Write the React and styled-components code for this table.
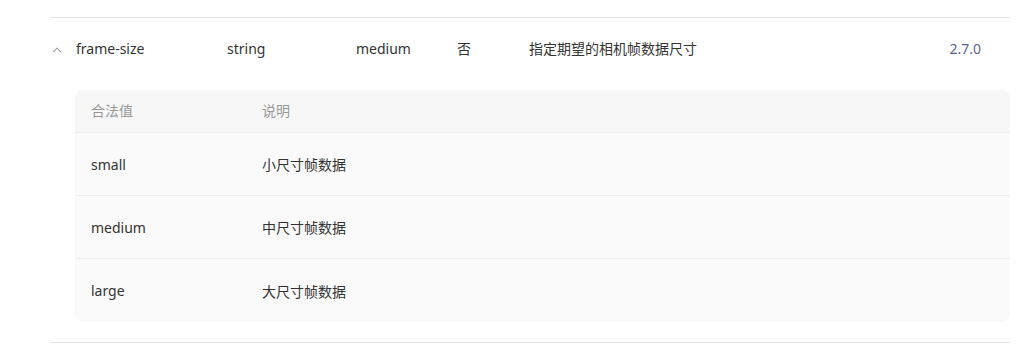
import styled, { createGlobalStyle } from "styled-components";

const GlobalStyle = createGlobalStyle`
    body {
        margin: 0;
        background: #ffffff;
        font-family: "Noto Sans", "Noto Sans CJK SC", sans-serif;
        font-size: 14px;
        color: #333333;
    }
`;

const values = [
    { value: "small", desc: "小尺寸帧数据" },
    { value: "medium", desc: "中尺寸帧数据" },
    { value: "large", desc: "大尺寸帧数据" },
];

const App = () => {
    return (
        <Page>
            <GlobalStyle />
            <Property>
                <Row>
                    <Toggle>
                        <svg width="10" height="6" viewBox="0 0 10 6">
                            <path
                                d="M1 5.2 L5 1.2 L9 5.2"
                                fill="none"
                                stroke="#9a9a9a"
                                strokeWidth="1.1"
                            />
                        </svg>
                    </Toggle>
                    <Cell>frame-size</Cell>
                    <Cell>string</Cell>
                    <Cell>medium</Cell>
                    <Cell>否</Cell>
                    <Cell>指定期望的相机帧数据尺寸</Cell>
                    <Version>2.7.0</Version>
                </Row>
                <Panel>
                    <PanelHead>
                        <HeadCell>合法值</HeadCell>
                        <HeadCell>说明</HeadCell>
                    </PanelHead>
                    {values.map((item) => (
                        <PanelRow key={item.value}>
                            <BodyCell>{item.value}</BodyCell>
                            <BodyCell>{item.desc}</BodyCell>
                        </PanelRow>
                    ))}
                </Panel>
            </Property>
        </Page>
    );
};
export default App;

const Page = styled.div`
    padding-top: 17px;
    padding-left: 50px;
    width: 960px;
`;

const Property = styled.div`
    border-top: 1px solid #e5e5e5;
    border-bottom: 1px solid #e5e5e5;
    padding-bottom: 20px;
`;

const Row = styled.div`
    display: grid;
    grid-template-columns: 26px 151px 129px 101px 72px 1fr auto;
    align-items: center;
    height: 62px;
    padding-right: 29px;
    margin-bottom: 10px;
    line-height: 20px;
`;

const Toggle = styled.div`
    display: flex;
    justify-content: center;
    align-items: center;
    padding-right: 12px;
    padding-top: 1px;
`;

const Cell = styled.div`
    color: #333333;
    white-space: nowrap;
`;

const Version = styled.div`
    color: #56658f;
`;

const Panel = styled.div`
    margin-left: 25px;
    border-radius: 8px;
    overflow: hidden;
    background: #fafafa;
`;

const PanelHead = styled.div`
    display: grid;
    grid-template-columns: 171px 1fr;
    align-items: center;
    height: 43px;
    padding-bottom: 2px;
    background: #f7f7f7;
    border-bottom: 1px solid #eeeeee;
    box-sizing: border-box;
`;

const PanelRow = styled.div`
    display: grid;
    grid-template-columns: 171px 1fr;
    align-items: center;
    height: 63px;
    box-sizing: border-box;
    border-bottom: 1px solid #eeeeee;
    &:last-child {
        border-bottom: none;
    }
`;

const HeadCell = styled.div`
    padding-left: 16px;
    color: #999999;
    font-size: 14px;
`;

const BodyCell = styled.div`
    padding-left: 16px;
    color: #333333;
`;
